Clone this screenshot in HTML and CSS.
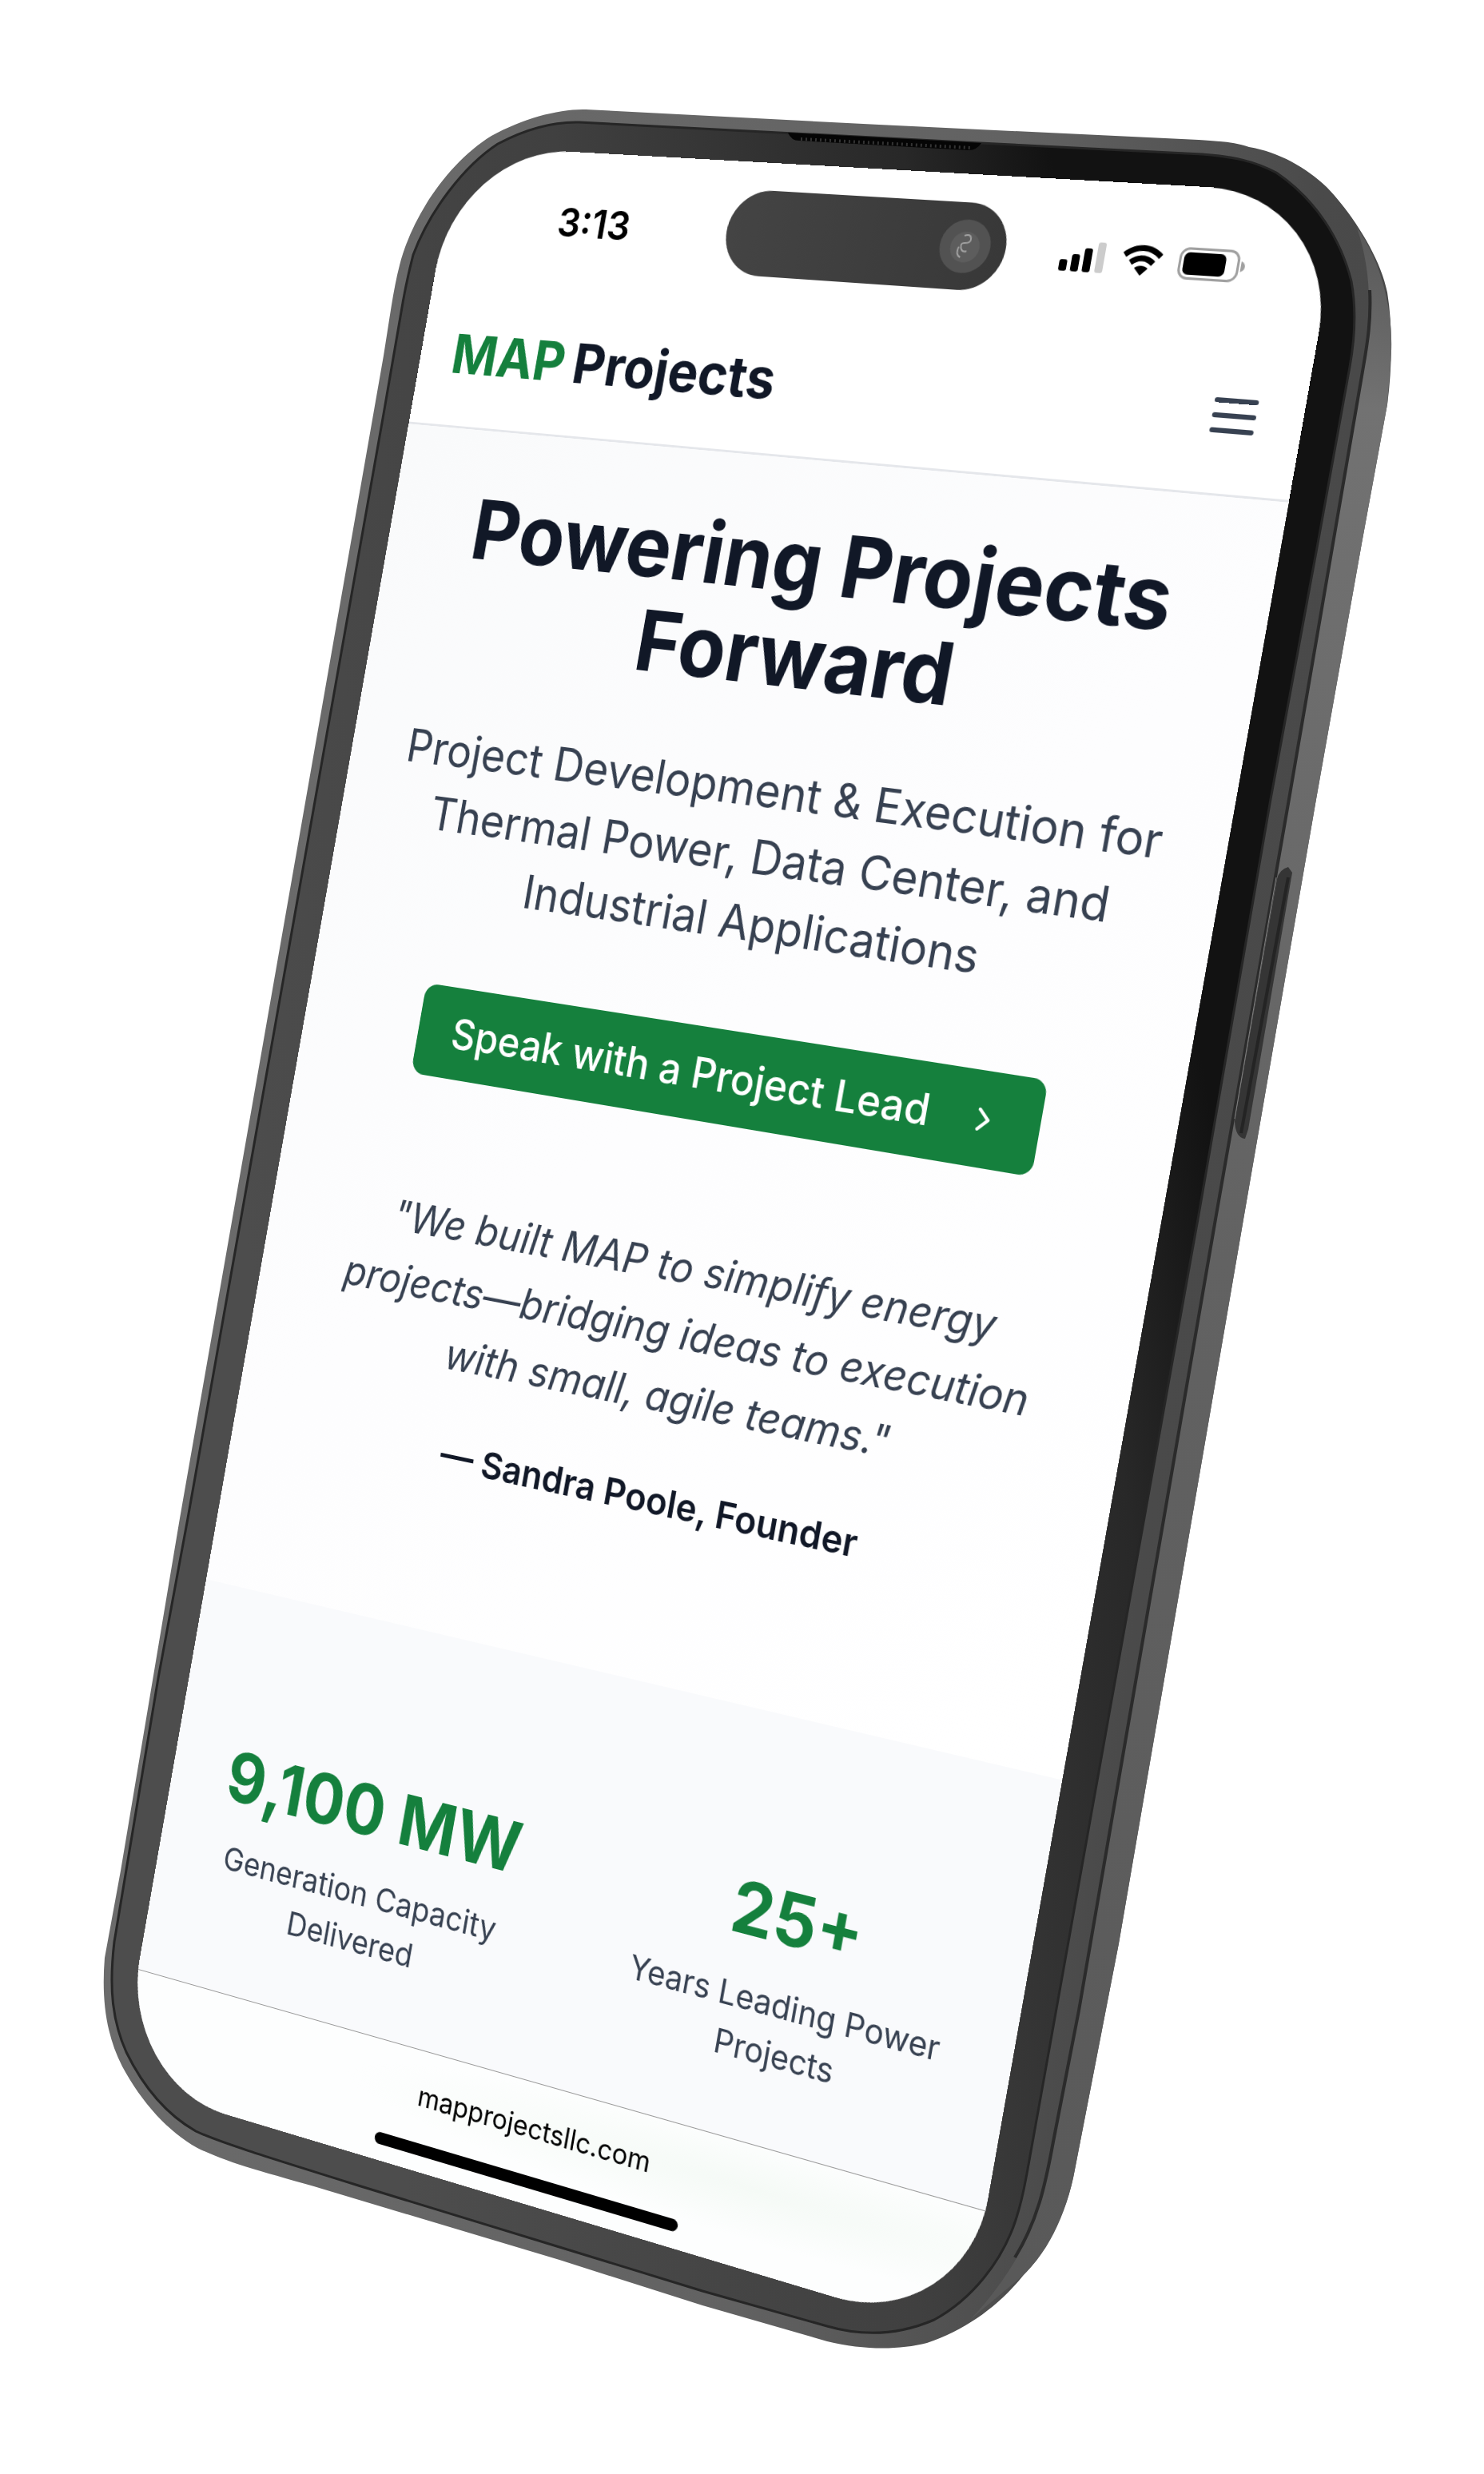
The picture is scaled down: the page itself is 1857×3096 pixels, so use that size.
FILE: index.html
```html
<!DOCTYPE html>
<html lang="en">
<head>
<meta charset="utf-8">
<meta name="viewport" content="width=device-width, initial-scale=1">
<title>MAP Projects</title>
<link rel="stylesheet" href="styles.css">
</head>
<body>
<div class="mockup">
  <svg class="phone" viewBox="120 138 1617 2820" aria-hidden="true">
    <defs>
      <linearGradient id="metal" gradientUnits="userSpaceOnUse" x1="150" y1="1500" x2="1700" y2="1700">
        <stop offset="0" stop-color="#6c6c6c"/><stop offset=".6" stop-color="#626262"/><stop offset=".85" stop-color="#4a4a4a"/><stop offset="1" stop-color="#474747"/>
      </linearGradient>
      <linearGradient id="glass" gradientUnits="userSpaceOnUse" x1="300" y1="1500" x2="1500" y2="1300">
        <stop offset="0" stop-color="#4d4d4d"/><stop offset=".5" stop-color="#404040"/><stop offset=".85" stop-color="#282828"/><stop offset="1" stop-color="#121212"/>
      </linearGradient>
      <linearGradient id="side" gradientUnits="userSpaceOnUse" x1="1700" y1="300" x2="1300" y2="2850">
        <stop offset="0" stop-color="#5a5a5a"/><stop offset=".08" stop-color="#727272"/><stop offset=".5" stop-color="#626262"/><stop offset="1" stop-color="#595959"/>
      </linearGradient>
    </defs>
    <path fill="url(#metal)" d="M733 137C700 136 655 148 615 170C560 204 515 272 500 332C492 362 487 403 480 445L225 1900L151 2341L131 2450C127 2500 132 2545 153 2586C178 2632 210 2667 247 2688C285 2707 330 2718 406 2740L700 2828L879 2885L1035 2930C1080 2941 1125 2941 1160 2932C1210 2915 1250 2885 1280 2848C1315 2812 1337 2760 1345 2715L1400 2432L1557 1520L1647 1000L1704 680L1736 506C1742 460 1743 410 1736 366C1727 320 1690 265 1660 234C1635 210 1600 190 1563 184C1545 178 1530 177 1500 175L1100 156Z"/>
    <path fill="url(#side)" d="M1698 285C1730 330 1743 390 1741 440L1736 506L1704 680L1647 1000L1557 1520L1400 2432L1345 2715C1335 2770 1310 2825 1270 2856L1215 2902C1255 2860 1285 2810 1295 2774C1305 2740 1312 2705 1318 2680L1350 2516L1522 1520L1613 1000L1668 680L1706 459C1718 390 1715 335 1698 285Z"/>
    <path fill="none" stroke="#2b2b2b" stroke-width="4" d="M1714 363C1716 400 1711 430 1706 459L1668 680L1613 1000L1522 1520L1350 2516L1318 2680C1308 2735 1298 2780 1270 2825"/>
    <path fill="url(#glass)" stroke="#262626" stroke-width="3" d="M725 153C690 152 655 163 623 180C580 208 537 265 517 319C509 350 507 362 504 379L480 518L235 1900L198 2100L143 2430C136 2490 141 2530 158 2568C180 2613 210 2647 245 2667C275 2681 330 2698 455 2737L700 2812L879 2867L1035 2911C1080 2924 1125 2922 1169 2903C1215 2878 1255 2830 1272 2775C1280 2750 1283 2730 1285 2720L1303 2620L1387 2150L1500 1520L1590 1000L1649 680L1689 459C1696 420 1697 385 1691 352C1678 300 1647 250 1597 216C1570 202 1545 196 1504 193L1226 179Z"/>
    <path fill="#050505" d="M986 166L1228 179Q1222 188 1212 188L1000 176Q990 176 986 166Z"/>
    <path fill="none" stroke="#343434" stroke-width="4" stroke-dasharray="2 4" d="M1002 174L1216 185"/>
    <path fill="#353535" d="M1598 1100Q1601 1088 1612 1085L1617 1092L1562 1413L1558 1425Q1546 1424 1545 1403Z"/>
    <path fill="none" stroke="#242424" stroke-width="4" d="M1612 1098L1553 1418"/>
    <path fill="none" stroke="#808080" stroke-width="1" d="M1597 1098L1545 1400"/>
  </svg>

  <div class="screen">
    <div class="status">
      <time class="clock">3:13</time>
      <div class="island">
        <svg class="camera" viewBox="0 0 66 66" aria-hidden="true">
          <circle cx="33" cy="33" r="33" fill="#525252"/>
          <circle cx="33" cy="34" r="19" fill="#5d5d5d"/>
          <path d="M30 20q8-3 9 3t-7 6q-6 0-4 6t8 4M25 34q-3 10 4 13" fill="none" stroke="#a2a2a2" stroke-width="2"/>
        </svg>
      </div>
      <div class="indicators">
        <svg class="signal" viewBox="0 0 58 37" aria-label="Signal">
          <rect x="0" y="23" width="10" height="14" rx="3"/><rect x="15" y="16" width="10" height="21" rx="3"/><rect x="30" y="8" width="10" height="29" rx="3"/><rect x="46" y="0" width="10" height="37" rx="3" fill="#ccc"/>
        </svg>
        <svg class="wifi" viewBox="0 0 51 37" aria-label="Wi-Fi">
          <path d="M25.500 0C35.500 0 44 4 50.500 10L46 15.500C40 10 33.500 7 25.500 7S11 10 5 15.500L.5 10C7 4 15.500 0 25.500 0Z"/>
          <path d="M25.500 12.500C32 12.500 37.500 15 42 19L37.500 24.500C34 21.500 30.500 19.500 25.500 19.500S17 21.500 13.500 24.500L9 19C13.500 15 19 12.500 25.500 12.500Z"/>
          <path d="M25.500 25C29 25 31.500 26 34 28L25.500 37L17 28C19.500 26 22 25 25.500 25Z"/>
        </svg>
        <svg class="battery" viewBox="0 0 82 39" aria-label="Battery">
          <rect x="1.500" y="1.500" width="72" height="36" rx="11" fill="none" stroke="#a0a0a0" stroke-width="3"/>
          <rect x="6" y="6" width="52" height="27" rx="7"/>
          <path d="M77 13Q82 15 82 19.500T77 26Z" fill="#a0a0a0"/>
        </svg>
      </div>
    </div>

    <header class="header">
      <a class="logo" href="#"><span class="logo-mark">MAP</span><span>Projects</span></a>
      <button class="menu" type="button" aria-label="Open menu">
        <svg viewBox="0 0 24 24" aria-hidden="true"><path d="M4 6h16M4 12h16M4 18h16" fill="none" stroke="currentColor" stroke-width="2" stroke-linecap="round"/></svg>
      </button>
    </header>

    <main class="main">
      <section class="hero">
        <h1>Powering Projects<br>Forward</h1>
        <p class="lead">Project Development &amp; Execution for<br>Thermal Power, Data Center, and<br>Industrial Applications</p>
        <button class="cta" type="button">Speak with a Project Lead
          <svg viewBox="0 0 24 24" aria-hidden="true"><path d="M9 6l6 6-6 6" fill="none" stroke="currentColor" stroke-width="2" stroke-linecap="round" stroke-linejoin="round"/></svg>
        </button>
        <blockquote class="quote">"We built MAP to simplify energy<br>projects—bridging ideas to execution<br>with small, agile teams."</blockquote>
        <p class="author">— Sandra Poole, Founder</p>
      </section>
      <section class="stats">
        <div class="stat"><strong>9,100 MW</strong><span>Generation Capacity<br>Delivered</span></div>
        <div class="stat"><strong>25+</strong><span>Years Leading Power<br>Projects</span></div>
      </section>
    </main>

    <footer class="toolbar">
      <span class="url">mapprojectsllc.com</span>
      <span class="home-bar"></span>
    </footer>
  </div>
</div>
</body>
</html>
```
FILE: styles.css
```css
* { box-sizing: border-box; margin: 0; padding: 0; }

body {
  min-height: 100vh;
  display: grid;
  place-items: center;
  background: #fff;
  font-family: Inter, "Liberation Sans", sans-serif;
  color: #111827;
}

.mockup {
  position: relative;
  width: 1617px;
  height: 2820px;
}

.phone {
  display: block;
  width: 100%;
  height: 100%;
  overflow: visible;
}

/* The handset display: a flat 1179 x 2556 page seen in perspective. */
.screen {
  position: absolute;
  top: 0;
  left: 0;
  width: 1179px;
  height: 2556px;
  display: flex;
  flex-direction: column;
  overflow: hidden;
  border-radius: 165px;
  background: #fff;
  transform-origin: 0 0;
  transform: matrix3d(
    0.813045, 0.043562, 0, -0.000081513,
    -0.166029, 0.95275, 0, 0.0000018607,
    0, 0, 1, 0,
    452.4, 44, 0, 1);
}

.status {
  height: 177px;
  padding-top: 35px;
  display: grid;
  grid-template-columns: 1fr 378px 1fr;
  align-items: start;
}

.clock {
  padding: 24px 0 0 30px;
  text-align: center;
  font-size: 51px;
  line-height: 64px;
  font-weight: 600;
  color: #000;
}

.island {
  width: 373px;
  height: 108px;
  padding: 0 20px;
  display: flex;
  align-items: center;
  justify-content: flex-end;
  border-radius: 54px;
  background: linear-gradient(90deg, #444, #383838);
}

.camera { width: 66px; height: 66px; }

.indicators {
  height: 114px;
  padding-left: 66px;
  display: flex;
  align-items: center;
  gap: 20px;
}

.signal { width: 58px; height: 37px; }
.wifi { width: 51px; height: 37px; }
.battery { width: 82px; height: 39px; }

.header {
  height: 189px;
  padding: 0 48px 0 46px;
  display: flex;
  align-items: center;
  justify-content: space-between;
  border-bottom: 3px solid #e5e7eb;
}

.logo {
  display: flex;
  gap: 12px;
  font-size: 70px;
  line-height: 96px;
  font-weight: 700;
  color: #111827;
  text-decoration: none;
}

.logo-mark { color: #15803d; }

.menu {
  width: 72px;
  height: 72px;
  border: 0;
  background: none;
  color: #374151;
}

.menu svg { display: block; width: 72px; height: 72px; }

.main { flex: 1; display: flex; flex-direction: column; }

.hero {
  height: 1524px;
  padding-top: 68px;
  display: flex;
  flex-direction: column;
  align-items: center;
  text-align: center;
  background: linear-gradient(135deg, #f9fafb, #fdfdfe 50%, #fff);
}

h1 { font-size: 106px; line-height: 118px; font-weight: 700; }

.lead {
  margin-top: 67px;
  font-size: 59px;
  line-height: 83px;
  color: #374151;
}

.cta {
  height: 117px;
  margin-top: 93px;
  padding: 0 48px;
  display: flex;
  align-items: center;
  gap: 45px;
  border: 0;
  border-radius: 18px;
  background: #15803d;
  color: #fff;
  font: 500 53px/83px Inter, "Liberation Sans", sans-serif;
}

.cta svg { width: 48px; height: 48px; }

.quote {
  margin-top: 142px;
  font-size: 53px;
  line-height: 81px;
  font-style: italic;
  color: #374151;
}

.author {
  margin-top: 51px;
  font-size: 47px;
  line-height: 72px;
  font-weight: 600;
}

.stats {
  flex: 1;
  padding: 185px 48px 0;
  display: grid;
  grid-template-columns: 1fr 1fr;
  align-content: start;
  gap: 96px;
  background: #f9fafc;
}

.stat {
  display: flex;
  flex-direction: column;
  align-items: center;
  gap: 22px;
  text-align: center;
  white-space: nowrap;
}

.stat strong { font-size: 88px; line-height: 108px; color: #15803d; }
.stat span { font-size: 41px; line-height: 60px; color: #374151; }

.toolbar {
  height: 150px;
  padding-top: 29px;
  display: flex;
  flex-direction: column;
  align-items: center;
  gap: 33px;
  border-top: 1px solid #999;
  background:
    radial-gradient(ellipse at 75% 35%, #f5faf6, #fdfefe 45%);
}

.url { font-size: 35px; line-height: 52px; color: #000; }
.home-bar { width: 423px; height: 15px; border-radius: 8px; background: #000; }
```
